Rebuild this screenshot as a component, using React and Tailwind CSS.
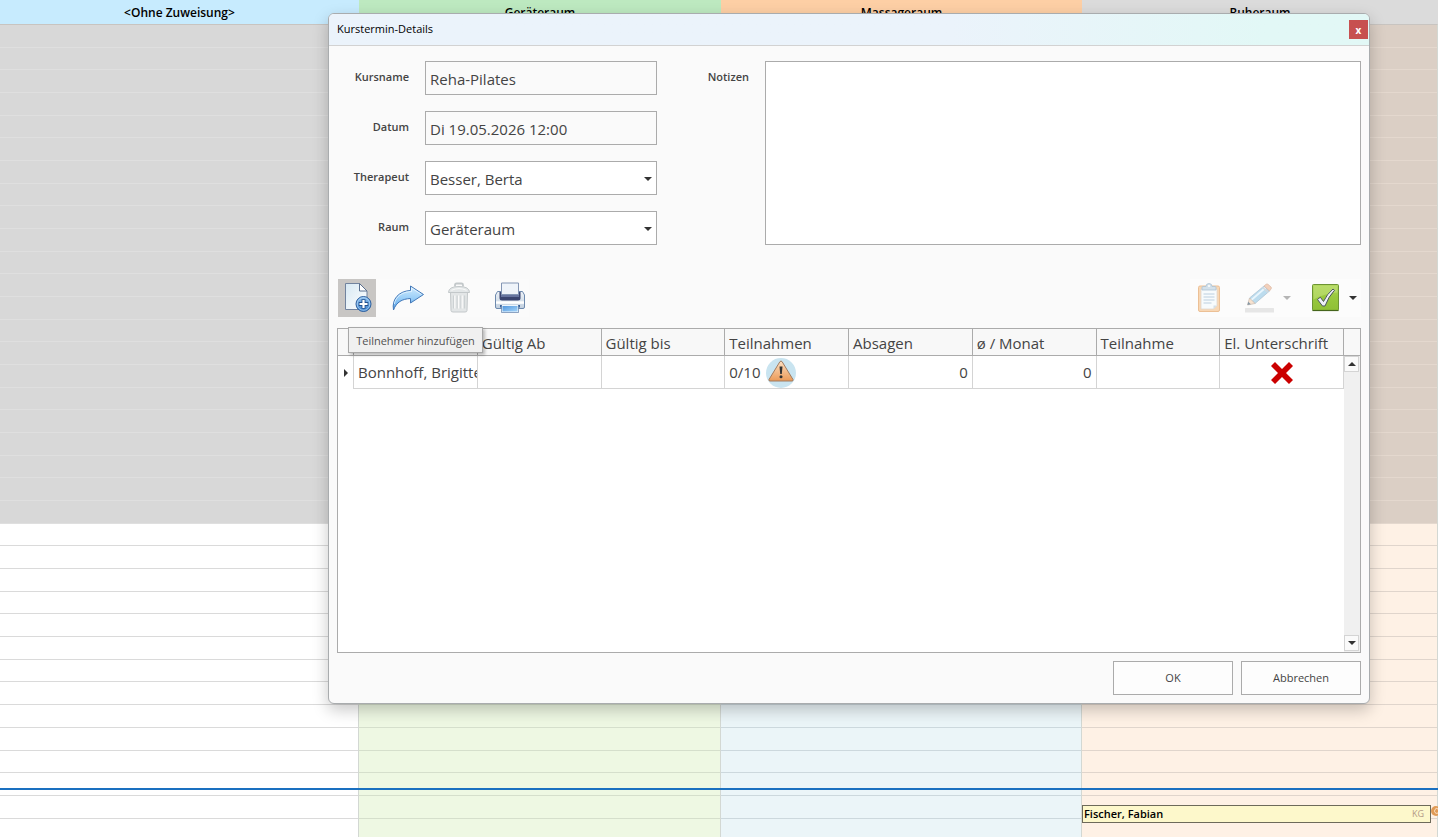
import clsx from "clsx";

const rooms = [
  { name: "<Ohne Zuweisung>", head: "bg-[#c7ebfe]", past: "bg-[#d8d8d8]", free: "bg-white", line: "border-[#dadada]", pastLine: "border-[#dfdfdf]" },
  { name: "Geräteraum", head: "bg-[#bde9c0]", past: "bg-[#cdd6c5]", free: "bg-[#eef8e3]", line: "border-[#d5dfcc]", pastLine: "border-[#d5ddce]" },
  { name: "Massageraum", head: "bg-[#fdcfa5]", past: "bg-[#c9d4d8]", free: "bg-[#ebf5f8]", line: "border-[#ccd8dd]", pastLine: "border-[#d2dce0]" },
  { name: "Ruheraum", head: "bg-[#dbdbdb]", past: "bg-[#dbcfc5]", free: "bg-[#fef1e5]", line: "border-[#e0d5cc]", pastLine: "border-[#e4d8ce]" },
];

const PAST_SLOTS = 22;
const slots = Array.from({ length: 36 }, (_, i) => i);

// the first column carries no caption
const columns = ["", "Gültig Ab", "Gültig bis", "Teilnahmen", "Absagen", "ø / Monat", "Teilnahme", "El. Unterschrift"];

function Caret({ className }) {
  return (
    <svg viewBox="0 0 8 4" className={clsx("w-2 h-1", className)}>
      <path d="M0 0h8L4 4z" fill="currentColor" />
    </svg>
  );
}

function AddPageIcon() {
  return (
    <svg viewBox="0 0 32 32" className="w-8 h-8">
      <defs>
        <linearGradient id="page" x1="0" y1="0" x2="1" y2="1">
          <stop offset="0" stopColor="#d6e8f3" />
          <stop offset="1" stopColor="#ffffff" />
        </linearGradient>
        <linearGradient id="plus" x1="0" y1="0" x2="0" y2="1">
          <stop offset="0" stopColor="#8cc0f0" />
          <stop offset="1" stopColor="#3d82cc" />
        </linearGradient>
      </defs>
      <path d="M4.500 1.500h14l7.500 7.500v18.500h-21.500z" fill="url(#page)" stroke="#71839e" strokeLinejoin="round" />
      <path d="M18.500 1.500V9H26z" fill="#fff" stroke="#5a7090" strokeLinejoin="round" />
      <circle cx="22.500" cy="22" r="7.500" fill="url(#plus)" stroke="#2d5f9e" />
      <circle cx="22.500" cy="22" r="6.300" fill="none" stroke="#b5d8f7" strokeWidth="0.700" />
      <path d="M22.500 17.200v9.600M17.700 22h9.600" stroke="#24528f" strokeWidth="4" />
      <path d="M22.500 18v8M18.500 22h8" stroke="#fff" strokeWidth="2.200" />
    </svg>
  );
}

function ForwardIcon() {
  return (
    <svg viewBox="0 0 32 32" className="w-8 h-8">
      <defs>
        <linearGradient id="fwd" x1="0" y1="0" x2="0" y2="1">
          <stop offset="0" stopColor="#d3ecfe" />
          <stop offset="0.500" stopColor="#9bcff8" />
          <stop offset="1" stopColor="#4e9be2" />
        </linearGradient>
      </defs>
      <path d="M1.500 28C-.5 17 7 9 18.500 8.500V4L31.500 12.500 18.500 21v-4.500C10 17 4.500 20 1.500 28z" fill="url(#fwd)" stroke="#4378b8" strokeLinejoin="round" />
      <path d="M2.300 22C4 14 10 10 19.500 9.500V6l10 6.500" fill="none" stroke="#eaf6ff" strokeWidth="0.800" />
    </svg>
  );
}

function TrashIcon() {
  return (
    <svg viewBox="0 0 32 32" className="w-8 h-8">
      <path d="M12 4.500v-1.500q0-1.500 1.500-1.500h5q1.500 0 1.500 1.500v1.500" fill="none" stroke="#c3c8ca" strokeWidth="1.800" />
      <path d="M7.500 10h17l-.5 18.500q0 1.500-2 1.500h-12q-2 0-2-1.500z" fill="#e3e6e7" stroke="#c3c8ca" />
      <path d="M5.500 10.500q0-6 10.500-6t10.500 6z" fill="#e3e7e8" stroke="#c3c8ca" />
      <path d="M8.500 8.300q7.500-3.500 15 0" stroke="#fafafa" fill="none" />
      <path d="M10.500 13.500v13M14.200 13.500v13M17.900 13.500v13M21.600 13.500v13" stroke="#ccd1d3" strokeWidth="1.200" />
      <path d="M11.800 13.500v13M15.500 13.500v13M19.200 13.500v13" stroke="#fbfbfb" strokeWidth="1.200" />
    </svg>
  );
}

function PrinterIcon() {
  return (
    <svg viewBox="0 0 32 32" className="w-8 h-8">
      <defs>
        <linearGradient id="body" x1="0" y1="0" x2="0" y2="1">
          <stop offset="0" stopColor="#eef3f8" />
          <stop offset="1" stopColor="#c2d0df" />
        </linearGradient>
        <linearGradient id="sheet" x1="0" y1="0" x2="1" y2="1">
          <stop offset="0" stopColor="#4f94dc" />
          <stop offset="1" stopColor="#a8d8fb" />
        </linearGradient>
      </defs>
      <path d="M3.500 9.500h25l2 3.500v12q0 1.500-1.500 1.500h-26q-1.500 0-1.500-1.500v-12z" fill="url(#body)" stroke="#6e8aae" strokeLinejoin="round" />
      <path d="M5.500 10h21v6q0 2.500-2.500 2.500h-16q-2.500 0-2.500-2.500z" fill="#3a4570" />
      <path d="M7 12h18v3H7z" fill="#66749f" />
      <path d="M7.500 1h17v11.500h-17z" fill="#eff4fa" stroke="#8496b4" />
      <path d="M2 19.300h28v2.500H2z" fill="#fff" />
      <path d="M6 23h20v2.500H6z" fill="#3c6299" />
      <path d="M8 23.500h16v6.500H8z" fill="url(#sheet)" stroke="#eef6fd" />
      <path d="M7.500 23v7.500h17V23" fill="none" stroke="#44699b" strokeWidth="0.600" />
    </svg>
  );
}

function ClipboardIcon() {
  return (
    <svg viewBox="0 0 32 32" className="w-8 h-8">
      <rect x="5.500" y="4" width="21" height="25.500" rx="1.500" fill="#f8d8b6" stroke="#ecc096" />
      <path d="M8 7h16v16.500L20.500 27H8z" fill="#f7fbfd" stroke="#dfd8ce" strokeWidth="0.800" />
      <path d="M24 23.500h-3.500V27z" fill="#d5dfe6" />
      <path d="M10.500 12h11M10.500 15h11M10.500 18h11M10.500 21h8" stroke="#bccfdf" />
      <path d="M9 8V5.500q0-1 1-1h3Q13 1.500 16 1.500t3 3h3q1 0 1 1V8z" fill="#d3e1eb" stroke="#adc3d3" strokeWidth="0.800" />
      <circle cx="16" cy="4" r="1" fill="#fff" />
    </svg>
  );
}

function PencilIcon() {
  return (
    <svg viewBox="0 0 32 32" className="w-8 h-8">
      <rect x="1" y="26" width="29" height="4.500" rx="0.500" fill="#e6e6e6" />
      <path d="M20 4l5.500 5L11 21.500 5.500 16z" fill="#bcdcee" stroke="#a9c0d0" strokeWidth="0.700" />
      <path d="M21.500 5.800L7.300 18" stroke="#e9f5fc" strokeWidth="1.800" />
      <path d="M20 4l2-1.700q1-.8 2 0l3 2.700q.9.900 0 2L25.500 9z" fill="#f2d0bb" stroke="#dcb8a4" strokeWidth="0.700" />
      <path d="M18.500 5.300l5.500 5" stroke="#d3d8dc" strokeWidth="1.400" />
      <path d="M5.500 16l5.500 5.500L3.500 23z" fill="#f7e2cf" stroke="#c9bcb0" strokeWidth="0.700" />
      <path d="M4.200 19.800l2.600 2.500-3.300.700z" fill="#8497a6" />
    </svg>
  );
}

function CheckIcon() {
  return (
    <svg viewBox="0 0 32 32" className="w-8 h-8">
      <defs>
        <linearGradient id="chk" x1="0" y1="0" x2="0" y2="1">
          <stop offset="0" stopColor="#acd455" />
          <stop offset="0.500" stopColor="#98c83c" />
          <stop offset="1" stopColor="#8fc035" />
        </linearGradient>
      </defs>
      <rect x="2.500" y="2.500" width="26" height="26" rx="1" fill="url(#chk)" stroke="#6d9433" />
      <path d="M2.500 28.500h26" stroke="#45651c" strokeWidth="1.200" />
      <path d="M3.500 3.500h24v7q-13 1-24 7z" fill="#c9e684" opacity="0.500" />
      <path d="M7.500 17.500l2.800-2.300 3.200 4.300Q17 12 23 7l1.500 1.300Q18.500 14.500 15 24h-2.500z" fill="#eef0f6" stroke="#4c5560" strokeLinejoin="round" />
    </svg>
  );
}

function WarningIcon() {
  return (
    <svg viewBox="0 0 30 30" className="w-[30px] h-[30px]">
      <defs>
        <linearGradient id="warn" x1="0" y1="0" x2="0" y2="1">
          <stop offset="0" stopColor="#fde0c2" />
          <stop offset="1" stopColor="#eb9a57" />
        </linearGradient>
      </defs>
      <circle cx="15" cy="15" r="15" fill="#c9e4f0" />
      <path d="M13.900 3.700q1.100-1.400 2.200 0L27 21.500q.5 1.500-1 1.500H4q-1.500 0-1-1.500z" fill="url(#warn)" stroke="#a07b60" />
      <path d="M13.500 8.500h3l-.7 7.500h-1.600z" fill="#333" />
      <circle cx="15" cy="18.700" r="1.500" fill="#333" />
    </svg>
  );
}

function CrossIcon() {
  return (
    <svg viewBox="0 0 22 22" className="w-[22px] h-[22px]">
      <path d="M4 0l7 7 7-7 4 4-7 7 7 7-4 4-7-7-7 7-4-4 7-7-7-7z" fill="#cb0000" />
    </svg>
  );
}

function Calendar() {
  return (
    <div className="relative min-h-full">
      <div className="grid grid-cols-[359fr_362fr_361fr_356fr]">
        {rooms.map((room) => (
          <section key={room.name} className="min-w-0">
            <h2 className={clsx("h-6 pt-px text-center text-xs leading-6 font-semibold text-black", room.head)}>{room.name}</h2>
            <div className={clsx("relative flex flex-col min-h-[817px] border-r border-t border-t-[#c8c4c0] border-r-[#d3d8d3]", room.free)}>
              {slots.map((slot) => (
                <div
                  key={slot}
                  className={clsx("flex-1 border-b", slot < PAST_SLOTS ? [room.past, room.pastLine] : room.line)}
                />
              ))}
              {room.name === "Ruheraum" && (
                <div className="absolute left-0 right-1.5 bottom-[18px] flex h-[18px] items-center justify-between border border-[#6d6a5a] bg-[#fdf8cb] pl-px pr-1.5">
                  <span className="text-[11px] leading-4 font-semibold text-black">Fischer, Fabian</span>
                  <span className="text-[9px] text-[#b39a88]">KG</span>
                  <svg viewBox="0 0 10 10" className="absolute -right-[11px] top-0 w-2.5 h-2.5">
                    <circle cx="5" cy="5" r="5" fill="#e09a55" />
                    <path d="M7 3Q5 1.500 4 3.500t0 3q1 1.500 3 .5" fill="none" stroke="#fbe3c8" />
                  </svg>
                </div>
              )}
            </div>
          </section>
        ))}
      </div>
      {/* current time */}
      <div className="absolute inset-x-0 top-[788px] h-0.5 bg-[#1a70c0]" />
    </div>
  );
}

const labelClass = "w-[72px] text-right text-[11px] leading-4 font-semibold text-[#444] pb-0.5";
const boxClass = "h-[34px] w-[232px] border border-[#ababab] px-1 pt-0.5 text-[15px] text-[#444] outline-none";

function TextField({ id, label, value }) {
  return (
    <div className="flex items-center gap-4">
      <label htmlFor={id} className={labelClass}>{label}</label>
      <input id={id} readOnly value={value} className={clsx(boxClass, "bg-[#fafafa]")} />
    </div>
  );
}

function SelectField({ id, label, value }) {
  return (
    <div className="flex items-center gap-4">
      <label htmlFor={id} className={labelClass}>{label}</label>
      <div className="relative">
        <select id={id} defaultValue={value} className={clsx(boxClass, "appearance-none bg-white")}>
          <option>{value}</option>
        </select>
        <Caret className="pointer-events-none absolute right-[5px] top-4 text-[#333]" />
      </div>
    </div>
  );
}

function ToolButton({ label, active, children }) {
  return (
    <button type="button" aria-label={label} className={clsx("flex size-[38px] items-center justify-center", active && "bg-[#c8c6c4]")}>
      {children}
    </button>
  );
}

function Toolbar() {
  return (
    <div className="flex justify-between pl-px">
      <div className="flex gap-[13px] bg-[#fbfbfb]">
        <div className="relative">
          <ToolButton label="Teilnehmer hinzufügen" active>
            <AddPageIcon />
          </ToolButton>
          <div role="tooltip" className="absolute left-2.5 top-12 z-10 flex h-[26px] w-[135px] items-center justify-center whitespace-nowrap border border-[#a8a8a8] bg-[#f0f0f0] pt-0.5 text-[11px] text-[#505050] shadow-[2px_2px_3px_rgba(0,0,0,0.25)]">
            Teilnehmer hinzufügen
          </div>
        </div>
        <ToolButton label="Verschieben"><ForwardIcon /></ToolButton>
        <ToolButton label="Löschen"><TrashIcon /></ToolButton>
        <ToolButton label="Drucken"><PrinterIcon /></ToolButton>
      </div>
      <div className="flex items-center bg-[#fcfcfc] pr-1">
        <ToolButton label="Einfügen"><ClipboardIcon /></ToolButton>
        <div className="ml-[13px] flex items-center">
          <ToolButton label="Bearbeiten"><PencilIcon /></ToolButton>
          <button type="button" aria-label="Mehr Bearbeiten" className="px-1 py-4 text-[#b5b5b5]"><Caret /></button>
        </div>
        <div className="ml-3 flex items-center">
          <ToolButton label="Bestätigen"><CheckIcon /></ToolButton>
          <button type="button" aria-label="Mehr Bestätigen" className="pl-1 py-4 text-[#333]"><Caret /></button>
        </div>
      </div>
    </div>
  );
}

function Participants() {
  const cell = "h-[33px] overflow-hidden whitespace-nowrap border-r border-b border-[#d4d4d4] px-1 pt-px";
  return (
    <div className="mt-[11px] flex h-[325px] border border-[#ababab] bg-white">
      <div className="min-w-0 flex-1">
        <table aria-label="Teilnehmer" className="w-full table-fixed border-separate border-spacing-0 text-[15px] text-[#444]">
          <colgroup>
            <col className="w-4" />
            {columns.map((c) => <col key={c} />)}
          </colgroup>
          <thead>
            <tr className="bg-[#f8f8f8] text-left">
              <th className="h-[27px] border-b border-r border-[#ababab]" />
              {columns.map((c) => (
                <th key={c} className="h-[27px] overflow-hidden whitespace-nowrap border-b border-r border-[#ababab] px-1 pt-0.5 leading-6 font-normal">{c}</th>
              ))}
            </tr>
          </thead>
          <tbody>
            <tr>
              <td className="h-[33px] border-r border-[#d4d4d4] p-0">
                <svg viewBox="0 0 4 8" className="mx-auto w-1 h-2 text-[#333]"><path d="M0 0l4 4-4 4z" fill="currentColor" /></svg>
              </td>
              <td className={cell}>Bonnhoff, Brigitte</td>
              <td className={cell} />
              <td className={cell} />
              <td className={cell}>
                <div className="flex items-center gap-1.5">0/10 <WarningIcon /></div>
              </td>
              <td className={clsx(cell, "text-right")}>0</td>
              <td className={clsx(cell, "text-right")}>0</td>
              <td className={cell} />
              <td className={cell}><div className="flex justify-center"><CrossIcon /></div></td>
            </tr>
          </tbody>
        </table>
      </div>
      <div className="flex w-4 flex-col">
        <div className="h-[27px] border-b border-[#ababab] bg-[#f8f8f8]" />
        <div className="flex flex-1 flex-col justify-between bg-[#f0f0f0] pb-px pr-px">
          <button type="button" aria-label="Nach oben" className="flex h-4 items-center justify-center border border-[#d4d4d4] bg-[#fafafa] text-[#333]">
            <Caret className="rotate-180" />
          </button>
          <button type="button" aria-label="Nach unten" className="flex h-4 items-center justify-center border border-[#d4d4d4] bg-[#fafafa] text-[#333]">
            <Caret />
          </button>
        </div>
      </div>
    </div>
  );
}

function CourseDialog() {
  const action = "h-[34px] w-[120px] border border-[#ababab] bg-[#fdfdfd] pt-px text-[11px] text-[#444]";
  return (
    <div role="dialog" aria-label="Kurstermin-Details" className="overflow-hidden rounded-md border border-[#a9acae] bg-[#fafafa] shadow-[0_6px_16px_rgba(0,0,0,0.22)]">
      <header className="flex h-8 items-center justify-between border-b border-[#d2d2d2] bg-linear-to-r from-[#ebf3fb] from-60% to-[#e2f8f6] to-90% pl-2 pr-px">
        <h1 className="text-[11px] text-black">Kurstermin-Details</h1>
        <button type="button" aria-label="Schließen" className="flex size-[19px] items-center justify-center bg-[#c75050] text-[10px] leading-none font-bold text-white">x</button>
      </header>
      <div className="px-2 pb-2 pt-[15px]">
        <form className="flex">
          <div className="flex flex-col gap-4">
            <TextField id="kurs" label="Kursname" value="Reha-Pilates" />
            <TextField id="datum" label="Datum" value="Di 19.05.2026 12:00" />
            <SelectField id="therapeut" label="Therapeut" value="Besser, Berta" />
            <SelectField id="raum" label="Raum" value="Geräteraum" />
          </div>
          <label htmlFor="notizen" className="ml-5 mr-4 mt-2 w-[72px] text-right text-[11px] leading-4 font-semibold text-[#444]">Notizen</label>
          <textarea id="notizen" className="flex-1 resize-none border border-[#ababab] bg-white p-1 text-[15px] outline-none" />
        </form>
        <div className="mt-[34px]">
          <Toolbar />
        </div>
        <Participants />
        <div className="mt-2 flex justify-end gap-2">
          <button type="button" className={action}>OK</button>
          <button type="button" className={action}>Abbrechen</button>
        </div>
      </div>
    </div>
  );
}

export default function App() {
  return (
    <div className="relative h-screen overflow-hidden bg-white font-['Open_Sans','Noto_Sans',sans-serif]">
      <Calendar />
      <div className="absolute inset-x-0 top-0 pl-[328px] pr-[68px] pt-[13px]">
        <CourseDialog />
      </div>
    </div>
  );
}
